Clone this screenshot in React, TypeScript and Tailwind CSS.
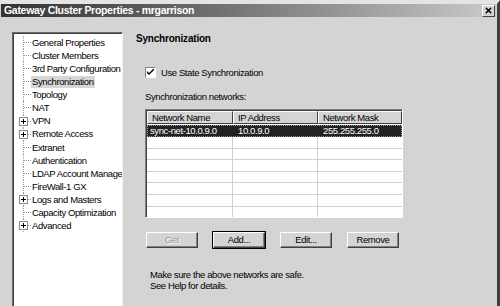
import { X } from 'lucide-react'

const TREE = [
  { label: 'General Properties' },
  { label: 'Cluster Members' },
  { label: '3rd Party Configuration' },
  { label: 'Synchronization', selected: true },
  { label: 'Topology' },
  { label: 'NAT' },
  { label: 'VPN', plus: true },
  { label: 'Remote Access', plus: true },
  { label: 'Extranet' },
  { label: 'Authentication' },
  { label: 'LDAP Account Management' },
  { label: 'FireWall-1 GX' },
  { label: 'Logs and Masters', plus: true },
  { label: 'Capacity Optimization' },
  { label: 'Advanced', plus: true },
]

const EMPTY_ROWS = 7

function PlusBox() {
  return (
    <span className="absolute left-[5px] top-[2px] w-[9px] h-[9px] border border-[#8a8a8a] bg-white flex items-center justify-center">
      <span className="relative w-[5px] h-[5px]">
        <span className="absolute left-0 top-[2px] w-[5px] h-px bg-black" />
        <span className="absolute left-[2px] top-0 w-px h-[5px] bg-black" />
      </span>
    </span>
  )
}

function TreeItem({ label, selected, plus }: { label: string; selected?: boolean; plus?: boolean }) {
  return (
    <div className="relative h-[13.1px] flex items-center pl-[17px] whitespace-nowrap">
      <span className="absolute left-[9px] top-0 bottom-0 border-l border-dotted border-[#9a9a9a]" />
      <span className="absolute left-[10px] top-[6px] w-[7px] border-t border-dotted border-[#9a9a9a]" />
      {plus && <PlusBox />}
      <span className={selected ? 'bg-[#d6d6d6] px-px py-px' : 'px-px'}>{label}</span>
    </div>
  )
}

function Button({ label, disabled, focused }: { label: string; disabled?: boolean; focused?: boolean }) {
  return (
    <div
      className={`w-[54px] h-[18px] flex items-center justify-center bg-[#d4d4d4] border ${
        focused ? 'border-black' : 'border-transparent'
      }`}
    >
      <div className="w-full h-full flex items-center justify-center border-t border-l border-white border-b border-r border-b-[#404040] border-r-[#404040] shadow-[inset_-1px_-1px_0_#808080]">
        <span className={disabled ? 'text-[#9a9a9a] [text-shadow:1px_1px_0_#fff]' : 'text-black'}>{label}</span>
      </div>
    </div>
  )
}

export default function App() {
  return (
    <div className="w-[500px] h-[306px] overflow-hidden bg-[#d4d4d4] text-[9.5px] tracking-[-0.4px] leading-none text-black font-['Liberation_Sans',Arial,sans-serif] border-t-4 border-t-[#e4e4e4] border-r-[3px] border-r-[#404040] flex flex-col">
      {/* title bar */}
      <div className="h-[13px] mx-[1px] flex items-center justify-between bg-gradient-to-r from-[#333] via-[#7a7a7a] to-[#cacaca] pl-[3px] pr-[1px]">
        <span className="text-white font-bold text-[10.5px] tracking-[-0.3px]">Gateway Cluster Properties - mrgarrison</span>
        <div className="w-[13px] h-[12px] bg-[#d4d4d4] border-t border-l border-white border-b border-r border-b-[#404040] border-r-[#404040] flex items-center justify-center">
          <X className="w-[9px] h-[9px]" strokeWidth={4} />
        </div>
      </div>

      <div className="flex-1 flex pl-[12px] pt-[15px]">
        {/* tree */}
        <div className="w-[111px] h-full bg-white border-t border-l border-[#6a6a6a] border-r border-r-[#f4f4f4] shadow-[inset_1px_1px_0_#404040] pt-[3px] pl-[1px] overflow-hidden">
          {TREE.map((t) => (
            <TreeItem key={t.label} {...t} />
          ))}
        </div>

        {/* page */}
        <div className="flex-1 pl-[13px]">
          <div className="font-bold text-[10px] tracking-[-0.2px] h-[14px] flex items-center">Synchronization</div>

          <div className="pl-[9px] pt-[20px]">
            <div className="flex items-center gap-[5px] h-[13px]">
              <div className="w-[11px] h-[11px] bg-white border-t border-l border-[#808080] border-b border-r border-b-white border-r-white flex items-center justify-center">
                <svg width="7" height="7" viewBox="0 0 7 7">
                  <path d="M0 2 L0 4 L2 6 L7 1 L7 -1 L2 4 Z" fill="black" />
                </svg>
              </div>
              <span>Use State Synchronization</span>
            </div>

            <div className="mt-[11px] h-[13px] flex items-center">Synchronization networks:</div>

            {/* table */}
            <div className="mt-[6px] w-[258px] h-[109px] overflow-hidden bg-white border-t border-l border-[#808080] border-b border-r border-b-white border-r-white shadow-[inset_1px_1px_0_#404040] pl-[1px] pt-[1px] whitespace-nowrap">
              <div className="grid grid-cols-[86px_85px_84px] h-[13px]">
                {['Network Name', 'IP Address', 'Network Mask'].map((h) => (
                  <div
                    key={h}
                    className="bg-[#d4d4d4] border-t border-l border-white border-b border-r border-b-[#404040] border-r-[#404040] flex items-center pl-[4px]"
                  >
                    {h}
                  </div>
                ))}
              </div>
              <div className="grid grid-cols-[86px_85px_84px] h-[12px] mt-[1px] bg-[#222] text-white border border-dotted border-[#999]">
                <div className="pl-[2px] flex items-center">sync-net-10.0.9.0</div>
                <div className="pl-[4px] flex items-center">10.0.9.0</div>
                <div className="pl-[4px] flex items-center">255.255.255.0</div>
              </div>
              {Array.from({ length: EMPTY_ROWS }).map((_, i) => (
                <div key={i} className="grid grid-cols-[86px_85px_84px] h-[11.6px] border-b border-[#d0d0d0]">
                  <div className="border-r border-[#d0d0d0]" />
                  <div className="border-r border-[#d0d0d0]" />
                  <div />
                </div>
              ))}
            </div>

            {/* buttons */}
            <div className="mt-[13px] flex gap-[13px]">
              <Button label="Get" disabled />
              <Button label="Add..." focused />
              <Button label="Edit..." />
              <Button label="Remove" />
            </div>

            <div className="mt-[21px] pl-[5px] leading-[10.5px]">
              <div>Make sure the above networks are safe.</div>
              <div>See Help for details.</div>
            </div>
          </div>
        </div>
      </div>
    </div>
  )
}
